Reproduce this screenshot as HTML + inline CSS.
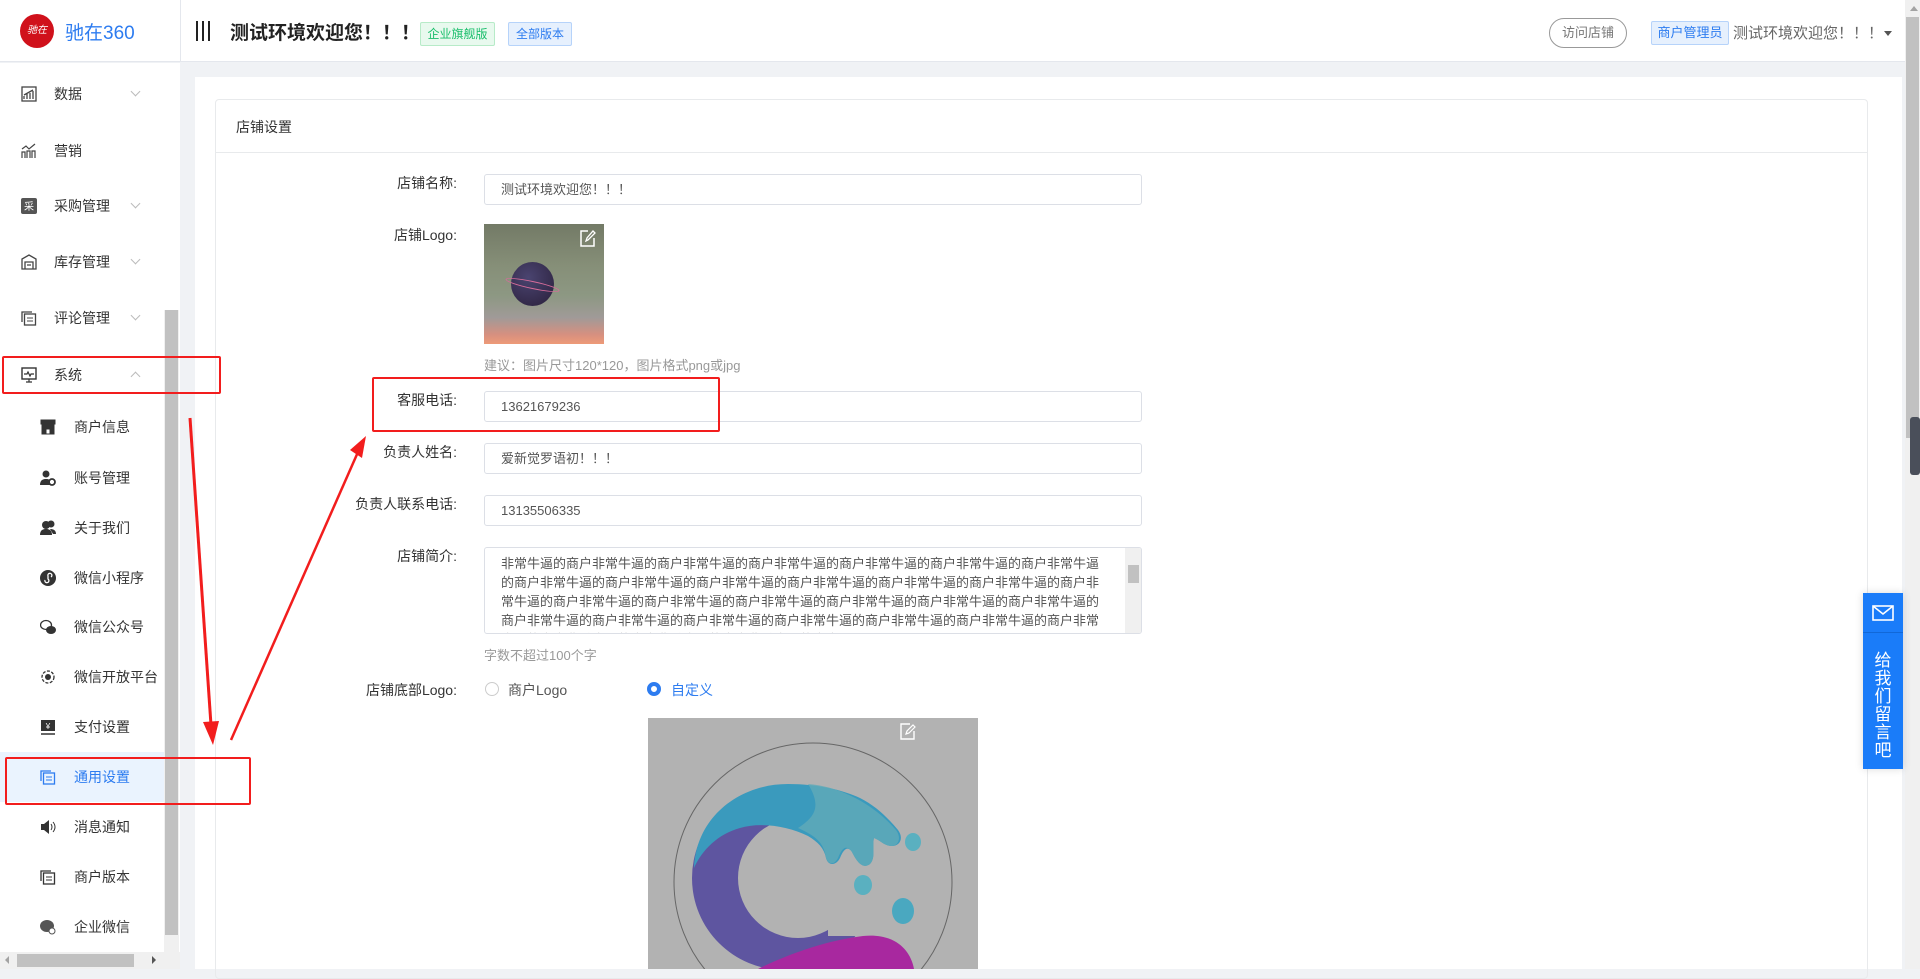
<!DOCTYPE html>
<html><head><meta charset="utf-8"><style>
*{margin:0;padding:0;box-sizing:border-box}
body{width:1920px;height:969px;overflow:hidden;background:#f0f2f5;font-family:"Liberation Sans","Noto Sans CJK SC",sans-serif;color:#333;position:relative}
.a{position:absolute}
.hdr{left:0;top:0;width:1905px;height:62px;background:#fff;border-bottom:1px solid #e4e7ed}
.side{left:0;top:63px;width:180px;height:906px;background:#fff}
.mi{position:absolute;left:0;width:164px;height:40px;line-height:40px;font-size:14px;color:#333}
.mi .t{position:absolute;left:54px}
.mi .ic{position:absolute;left:21px;top:12px;width:16px;height:16px}
.mi .ch{position:absolute;left:132px;top:14px;width:7px;height:7px;border-right:1px solid #bbb;border-bottom:1px solid #bbb;transform:rotate(45deg)}
.si .t{left:74px}
.si .ic{left:40px}
.lbl{position:absolute;width:250px;left:207px;text-align:right;font-size:14px;color:#333}
.inp{position:absolute;left:484px;width:658px;height:31px;border:1px solid #dcdfe6;border-radius:3px;font-size:13px;color:#555;padding-left:16px;line-height:29px}
.hint{position:absolute;left:484px;font-size:13px;color:#999}
</style></head><body>

<!-- header -->
<div class="a hdr"></div>
<div class="a" style="left:180px;top:0;width:1px;height:62px;background:#e4e7ed"></div>
<div class="a" style="left:20px;top:14px;width:34px;height:34px;border-radius:50%;background:#d0111b;color:#fff;font-size:10px;line-height:34px;text-align:center;font-style:italic">驰在</div>
<div class="a" style="left:65px;top:18px;font-size:19px;color:#2d7cf0">驰在360</div>
<div class="a" style="left:196px;top:21px;width:2px;height:20px;background:#222"></div>
<div class="a" style="left:202px;top:21px;width:2px;height:20px;background:#222"></div>
<div class="a" style="left:208px;top:21px;width:2px;height:20px;background:#222"></div>
<div class="a" style="left:230px;top:18px;font-size:19px;font-weight:bold;color:#222">测试环境欢迎您！！！</div>
<div class="a" style="left:420px;top:22px;width:75px;height:24px;border:1px solid #b7ebc8;background:#e8f9ee;color:#19be6b;font-size:12px;line-height:22px;text-align:center;border-radius:2px">企业旗舰版</div>
<div class="a" style="left:508px;top:22px;width:64px;height:24px;border:1px solid #b6d3fa;background:#e6f0fd;color:#2d7cf0;font-size:12px;line-height:22px;text-align:center;border-radius:2px">全部版本</div>
<div class="a" style="left:1549px;top:18px;width:78px;height:30px;border:1px solid #999;border-radius:15px;font-size:13px;color:#777;line-height:28px;text-align:center">访问店铺</div>
<div class="a" style="left:1651px;top:21px;width:78px;height:24px;border:1px solid #b6d3fa;background:#e6f0fd;color:#2d7cf0;font-size:13px;line-height:22px;text-align:center;border-radius:2px">商户管理员</div>
<div class="a" style="left:1733px;top:22px;font-size:15px;color:#666">测试环境欢迎您！！！</div>
<div class="a" style="left:1884px;top:31px;border-left:4px solid transparent;border-right:4px solid transparent;border-top:5px solid #555"></div>

<!-- page scrollbar -->
<div class="a" style="left:1905px;top:0;width:15px;height:969px;background:#f0f0f0"></div>
<div class="a" style="left:1906px;top:17px;width:13px;height:421px;background:#c1c1c1"></div>
<div class="a" style="left:1910px;top:6px;border-left:4px solid transparent;border-right:4px solid transparent;border-bottom:5px solid #a3a3a3"></div>
<div class="a" style="left:1910px;top:417px;width:10px;height:58px;background:#4a4f5a;border-radius:3px"></div>

<!-- sidebar -->
<div class="a side"></div>
<div class="a" style="left:164px;top:310px;width:15px;height:642px;background:#f0f0f0"></div>
<div class="a" style="left:165px;top:310px;width:13px;height:625px;background:#c1c1c1"></div>
<div class="a" style="left:0;top:952px;width:180px;height:17px;background:#f0f0f0"></div>
<div class="a" style="left:17px;top:954px;width:117px;height:13px;background:#c1c1c1"></div>
<div class="a" style="left:5px;top:956px;border-top:4px solid transparent;border-bottom:4px solid transparent;border-right:4px solid #a3a3a3"></div>
<div class="a" style="left:152px;top:956px;border-top:4px solid transparent;border-bottom:4px solid transparent;border-left:4px solid #555"></div>

<div class="mi" style="top:74px"><svg class="ic" viewBox="0 0 16 16"><rect x="1" y="1" width="14" height="14" fill="none" stroke="#444" stroke-width="1.3"/><path d="M3 13V10M6 13V8M9 13V7M12 13V5M3 9L12 4" stroke="#444" stroke-width="1.3" fill="none"/></svg><span class="t">数据</span><i class="ch"></i></div>
<div class="mi" style="top:131px"><svg class="ic" viewBox="0 0 16 16"><path d="M1 15V9h3v6M6 15V8h3v7M11 15V8h3v7M1 6L5 3l3 3 6-5" stroke="#444" stroke-width="1.2" fill="none"/></svg><span class="t">营销</span></div>
<div class="mi" style="top:186px"><svg class="ic" viewBox="0 0 16 16"><rect x="0" y="0" width="16" height="16" rx="2" fill="#555"/><text x="8" y="12" font-size="10" fill="#fff" text-anchor="middle">采</text></svg><span class="t">采购管理</span><i class="ch"></i></div>
<div class="mi" style="top:242px"><svg class="ic" viewBox="0 0 16 16"><path d="M1 15V5L8 1l7 4v10H1zM4 15V8h8v7M6 11h4" stroke="#444" stroke-width="1.3" fill="none"/></svg><span class="t">库存管理</span><i class="ch"></i></div>
<div class="mi" style="top:298px"><svg class="ic" viewBox="0 0 16 16"><path d="M1 12V2h10" stroke="#444" stroke-width="1.3" fill="none"/><rect x="3.5" y="4" width="11" height="11" fill="none" stroke="#444" stroke-width="1.3"/><path d="M6 8h6M6 11h6" stroke="#444"/></svg><span class="t">评论管理</span><i class="ch"></i></div>
<div class="mi" style="top:355px"><svg class="ic" viewBox="0 0 16 16"><rect x="1" y="1" width="14" height="11" fill="none" stroke="#333" stroke-width="1.4"/><path d="M3 7h3l1-2 2 4 1-2h3M5 15h6M8 12v3" stroke="#333" stroke-width="1.2" fill="none"/></svg><span class="t">系统</span><i class="ch" style="transform:rotate(225deg);top:18px"></i></div>

<div class="a" style="left:0;top:752px;width:164px;height:50px;background:#eaf3fe"></div>
<div class="mi si" style="top:407px"><svg class="ic" viewBox="0 0 16 16"><path d="M1 1h14v4H1zM2 5v10h12V5M6 15v-5h4v5" fill="#333" stroke="#333"/></svg><span class="t">商户信息</span></div>
<div class="mi si" style="top:458px"><svg class="ic" viewBox="0 0 16 16"><circle cx="6" cy="4" r="3.5" fill="#333"/><path d="M0 15c0-5 3-6 6-6s4 1 4 2v4z" fill="#333"/><circle cx="12" cy="12" r="3" fill="none" stroke="#333" stroke-width="1.8"/></svg><span class="t">账号管理</span></div>
<div class="mi si" style="top:508px"><svg class="ic" viewBox="0 0 16 16"><circle cx="6" cy="5" r="4" fill="#333"/><path d="M0 15c0-5 3-6 6-6s6 1 6 6z" fill="#333"/><circle cx="11" cy="4" r="3.5" fill="#333"/><path d="M10 9c3 0 6 1 6 5h-3" fill="#333"/></svg><span class="t">关于我们</span></div>
<div class="mi si" style="top:558px"><svg class="ic" viewBox="0 0 16 16"><circle cx="8" cy="8" r="8" fill="#333"/><path d="M5 10a2 2 0 1 0 3-1V6a2 2 0 1 1 3 1" stroke="#fff" stroke-width="1.3" fill="none"/></svg><span class="t">微信小程序</span></div>
<div class="mi si" style="top:607px"><svg class="ic" viewBox="0 0 16 16"><ellipse cx="6" cy="6" rx="5.5" ry="4.5" fill="none" stroke="#333" stroke-width="1.3"/><ellipse cx="11" cy="11" rx="5" ry="4" fill="#333"/></svg><span class="t">微信公众号</span></div>
<div class="mi si" style="top:657px"><svg class="ic" viewBox="0 0 16 16"><circle cx="8" cy="8" r="6" fill="none" stroke="#333" stroke-width="1.3" stroke-dasharray="3 1.5"/><circle cx="8" cy="8" r="3" fill="#333"/></svg><span class="t">微信开放平台</span></div>
<div class="mi si" style="top:707px"><svg class="ic" viewBox="0 0 16 16"><rect x="1" y="1" width="14" height="11" fill="#333"/><path d="M1 15h14" stroke="#333" stroke-width="1.5"/><text x="8" y="10" font-size="8" fill="#fff" text-anchor="middle">¥</text></svg><span class="t">支付设置</span></div>
<div class="mi si" style="top:757px;color:#2d7cf0"><svg class="ic" viewBox="0 0 16 16"><path d="M1 12V2h10" stroke="#2d7cf0" stroke-width="1.3" fill="none"/><rect x="3.5" y="4" width="11" height="11" fill="none" stroke="#2d7cf0" stroke-width="1.3"/><path d="M6 8h6M6 11h6" stroke="#2d7cf0"/></svg><span class="t">通用设置</span></div>
<div class="mi si" style="top:807px"><svg class="ic" viewBox="0 0 16 16"><path d="M1 5h3l5-4v14l-5-4H1z" fill="#333"/><path d="M11 5q2 3 0 6M13 3q4 5 0 10" stroke="#333" fill="none"/></svg><span class="t">消息通知</span></div>
<div class="mi si" style="top:857px"><svg class="ic" viewBox="0 0 16 16"><path d="M1 12V2h10" stroke="#333" stroke-width="1.3" fill="none"/><rect x="3.5" y="4" width="11" height="11" fill="none" stroke="#333" stroke-width="1.3"/><path d="M6 8h6M6 11h6" stroke="#333"/></svg><span class="t">商户版本</span></div>
<div class="mi si" style="top:907px"><svg class="ic" viewBox="0 0 16 16"><ellipse cx="7" cy="7" rx="7" ry="6" fill="#555"/><circle cx="12" cy="12" r="3" fill="#fff" stroke="#555"/></svg><span class="t">企业微信</span></div>

<!-- main card -->
<div class="a" style="left:195px;top:77px;width:1707px;height:892px;background:#fff"></div>
<div class="a" style="left:215px;top:99px;width:1653px;height:880px;border:1px solid #e8eaec;border-radius:4px"></div>
<div class="a" style="left:215px;top:152px;width:1653px;height:1px;background:#e8eaec"></div>
<div class="a" style="left:236px;top:117px;font-size:14px;color:#333">店铺设置</div>

<div class="lbl" style="top:173px">店铺名称:</div>
<div class="inp" style="top:174px">测试环境欢迎您！！！</div>

<div class="lbl" style="top:225px">店铺Logo:</div>
<div class="a" style="left:484px;top:224px;width:120px;height:120px;background:linear-gradient(180deg,#737a66 0%,#868f78 35%,#8d9883 60%,#a09a98 78%,#d69080 92%,#ee9a78 100%)"></div>
<div class="a" style="left:511px;top:262px;width:43px;height:44px;border-radius:50%;background:radial-gradient(circle at 40% 35%,#4a4470,#2a1f3a)"></div>
<div class="a" style="left:505px;top:281px;width:55px;height:8px;border-radius:50%;border:1px solid #d66c9a;transform:rotate(12deg)"></div>
<svg class="a" style="left:580px;top:229px" width="16" height="18" viewBox="0 0 16 18"><path d="M8 2H1v15h13V9" stroke="#fff" stroke-width="1.5" fill="none"/><path d="M6 12l1-3 6-7 2 2-7 7z" stroke="#fff" stroke-width="1.3" fill="none"/></svg>
<div class="hint" style="top:355px">建议：图片尺寸120*120，图片格式png或jpg</div>

<div class="lbl" style="top:390px">客服电话:</div>
<div class="inp" style="top:391px">13621679236</div>
<div class="lbl" style="top:442px">负责人姓名:</div>
<div class="inp" style="top:443px">爱新觉罗语初！！！</div>
<div class="lbl" style="top:494px">负责人联系电话:</div>
<div class="inp" style="top:495px">13135506335</div>

<div class="lbl" style="top:546px">店铺简介:</div>
<div class="a" style="left:484px;top:547px;width:658px;height:87px;border:1px solid #dcdfe6;border-radius:3px;overflow:hidden">
<div style="position:absolute;left:16px;top:6px;width:610px;font-size:13px;line-height:19px;color:#555">非常牛逼的商户非常牛逼的商户非常牛逼的商户非常牛逼的商户非常牛逼的商户非常牛逼的商户非常牛逼的商户非常牛逼的商户非常牛逼的商户非常牛逼的商户非常牛逼的商户非常牛逼的商户非常牛逼的商户非常牛逼的商户非常牛逼的商户非常牛逼的商户非常牛逼的商户非常牛逼的商户非常牛逼的商户非常牛逼的商户非常牛逼的商户非常牛逼的商户非常牛逼的商户非常牛逼的商户非常牛逼的商户非常牛逼的商户非常牛逼的商户非常牛逼的商户非常牛逼的商户非常牛逼的商户</div>
<div style="position:absolute;right:0;top:0;width:16px;height:87px;background:#f0f0f0"></div>
<div style="position:absolute;right:2px;top:17px;width:11px;height:18px;background:#c1c1c1"></div>
</div>
<div class="hint" style="top:645px">字数不超过100个字</div>

<div class="lbl" style="top:680px">店铺底部Logo:</div>
<div class="a" style="left:485px;top:682px;width:14px;height:14px;border:1px solid #ccc;border-radius:50%"></div>
<div class="a" style="left:508px;top:680px;font-size:14px;color:#555">商户Logo</div>
<div class="a" style="left:647px;top:682px;width:14px;height:14px;border:4px solid #2d7cf0;border-radius:50%;background:#fff"></div>
<div class="a" style="left:671px;top:680px;font-size:14px;color:#2d7cf0">自定义</div>

<svg class="a" style="left:648px;top:718px" width="330" height="251" viewBox="0 0 330 251">
<rect width="330" height="251" fill="#b2b2b2"/>
<circle cx="165" cy="164" r="139" fill="none" stroke="#666" stroke-width="1"/>
<!-- purple C body -->
<path fill-rule="evenodd" fill="#5e55a0" d="M136 68 A92 92 0 1 0 136 252 A92 92 0 1 0 136 68Z M150 100 A60 60 0 1 1 150 220 A60 60 0 1 1 150 100Z"/>
<rect x="180" y="96" width="100" height="122" fill="#b2b2b2"/>
<!-- blue top wave -->
<path fill="#3a9abd" d="M46 150 C48 100 90 66 140 66 C170 66 195 72 212 80 C228 88 240 100 250 112 C256 120 252 128 244 128 C236 128 232 122 226 120 C224 128 228 140 222 146 C214 152 208 142 204 134 C200 128 196 130 192 140 C188 148 180 148 178 140 C176 130 170 124 160 118 C140 108 112 104 92 110 C70 116 54 132 46 150Z"/>
<path fill="#62aab8" d="M160 66 C190 68 225 85 248 112 C254 120 250 128 244 128 C236 128 232 122 226 120 C224 128 228 140 222 146 C214 152 208 142 204 134 C198 126 194 130 190 140 C186 148 180 146 178 140 C176 125 168 118 150 110 C165 100 175 90 160 66Z" opacity=".8"/>
<!-- magenta bottom wave -->
<path fill="#a8289f" d="M110 251 C140 236 180 222 215 218 C245 215 262 230 266 251Z"/>
<ellipse cx="265" cy="124" rx="8" ry="9" fill="#5ab0c0"/>
<ellipse cx="215" cy="167" rx="9" ry="10" fill="#5ab0c0"/>
<ellipse cx="255" cy="193" rx="11" ry="13" fill="#4aa8c0"/>
<path d="M262 6H253v15h13V13" stroke="#fff" stroke-width="1.4" fill="none"/><path d="M258 16l1-3 6-6 2 2-6 6z" stroke="#fff" stroke-width="1.2" fill="none"/>
</svg>

<!-- float button -->
<div class="a" style="left:1863px;top:593px;width:40px;height:176px;background:#1a7cf9;box-shadow:0 0 8px rgba(0,0,0,.15)"></div>
<svg class="a" style="left:1872px;top:605px" width="22" height="16" viewBox="0 0 22 16"><rect x="1" y="1" width="20" height="14" fill="none" stroke="#fff" stroke-width="1.6"/><path d="M1 1l10 8 10-8" stroke="#fff" stroke-width="1.6" fill="none"/></svg>
<div class="a" style="left:1863px;top:632px;width:40px;height:1px;background:#1168d8"></div>
<div class="a" style="left:1872px;top:652px;width:22px;font-size:17px;line-height:18px;color:#fff;text-align:center">给我们留言吧</div>

<!-- annotations -->
<div class="a" style="left:2px;top:356px;width:219px;height:38px;border:2.5px solid #f21d1d;border-radius:2px"></div>
<div class="a" style="left:5px;top:757px;width:246px;height:48px;border:2.5px solid #f21d1d;border-radius:2px"></div>
<div class="a" style="left:372px;top:377px;width:348px;height:55px;border:2.5px solid #f21d1d;border-radius:2px"></div>
<svg class="a" style="left:0;top:0" width="400" height="969" viewBox="0 0 400 969">
<path d="M190 418 L211 725" stroke="#f21d1d" stroke-width="3"/>
<path d="M203 722 L213 745 L219 721Z" fill="#f21d1d"/>
<path d="M231 740 L358 452" stroke="#f21d1d" stroke-width="2.5"/>
<path d="M350 450 L366 436 L362 458Z" fill="#f21d1d"/>
</svg>
</body></html>
